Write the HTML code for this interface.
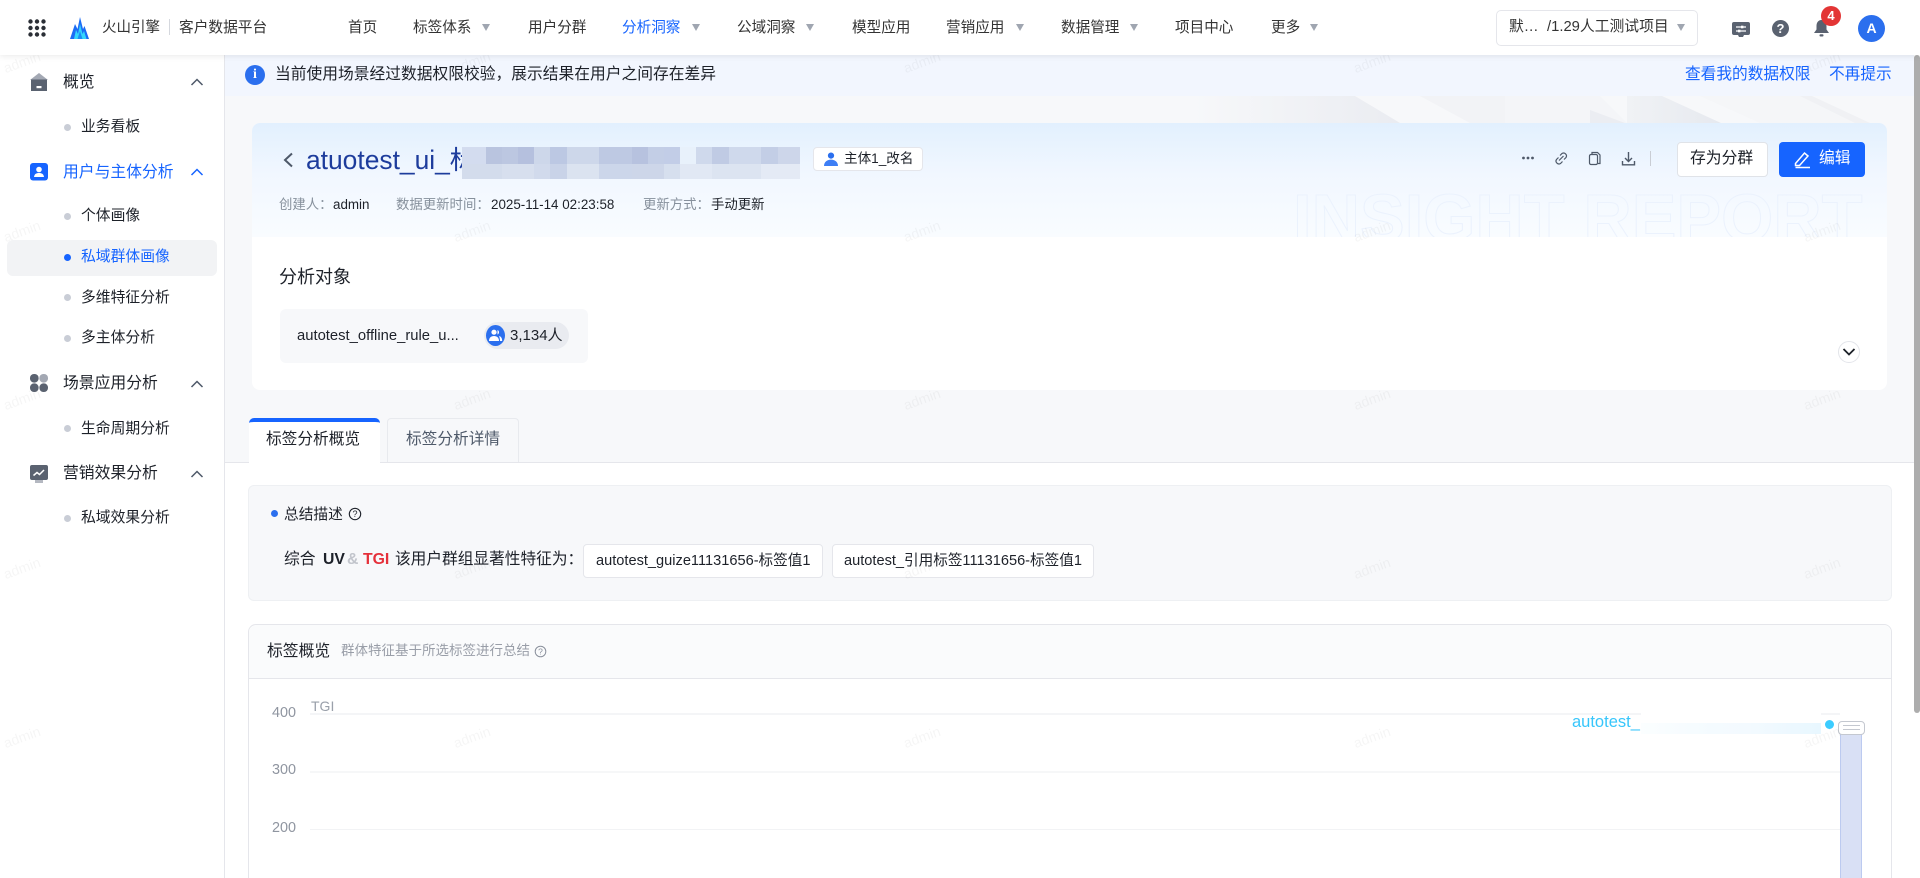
<!DOCTYPE html>
<html lang="zh-CN">
<head>
<meta charset="utf-8">
<title>客户数据平台</title>
<style>
*{box-sizing:border-box;margin:0;padding:0}
html,body{width:1920px;height:878px;overflow:hidden;background:#fff;font-family:"Liberation Sans","Noto Sans CJK SC",sans-serif;color:#1d2129}
#root{position:absolute;left:0;top:0;width:1920px;height:878px;overflow:hidden;background:#fff}
.a{position:absolute}
.t{position:absolute;white-space:nowrap;line-height:20px;height:20px}
.arr{position:absolute;width:0;height:0;border-left:4px solid transparent;border-right:4px solid transparent;border-top:7px solid #a0a6b1;top:24px}
.dot{position:absolute;left:64px;width:7px;height:7px;border-radius:50%;background:#c9cdd6}
.wm{position:absolute;font-size:14px;line-height:16px;width:50px;text-align:center;color:rgba(0,0,0,.04);transform:rotate(-20deg);pointer-events:none}
svg{position:absolute;display:block}
</style>
</head>
<body>
<div id="root">

<!-- main background -->
<div class="a" style="left:224px;top:55px;width:1696px;height:823px;background:#f7f8fa"></div>

<!-- hero texture -->
<svg style="left:1180px;top:96px" width="734" height="30" viewBox="1180 96 734 30">
<defs>
<linearGradient id="g1" x1="0" x2="1" y1="0" y2="0"><stop offset="0" stop-color="#f7f8fa"/><stop offset="1" stop-color="#eaecf1"/></linearGradient>
<linearGradient id="g2" x1="0" x2="1" y1="0" y2="0"><stop offset="0" stop-color="#f0f2f5"/><stop offset="1" stop-color="#e6e9ef"/></linearGradient>
</defs>
<polygon points="1193,96 1355,96 1400,123 1193,123" fill="url(#g1)"/>
<polygon points="1420,96 1505,96 1505,123 1470,123" fill="#f2f3f6"/>
<polygon points="1505,96 1600,96 1627,123 1505,123" fill="#f4f5f8"/>
<polygon points="1590,110 1625,123 1590,123" fill="#ebedf2"/>
<polygon points="1627,96 1662,96 1721,123 1627,123" fill="url(#g2)"/>
<polygon points="1700,96 1800,96 1860,123 1760,123" fill="#f5f6f8"/>
<polygon points="1800,96 1812,96 1870,123 1855,123" fill="#f0f1f4"/>
</svg>

<!-- info bar -->
<div class="a" style="left:224px;top:55px;width:1690px;height:41px;background:#f2f6fe"></div>
<div class="a" style="left:245px;top:65px;width:20px;height:20px;border-radius:50%;background:#2b6fee;color:#fff;font:bold 14px/20px 'Liberation Serif',serif;text-align:center">i</div>
<div class="t" style="left:275px;top:65px;font-size:15.75px;color:#1d2129">当前使用场景经过数据权限校验，展示结果在用户之间存在差异</div>
<div class="t" style="left:1685px;top:65px;font-size:15.7px;color:#1664ff">查看我的数据权限</div>
<div class="t" style="left:1829px;top:65px;font-size:15.7px;color:#1664ff">不再提示</div>

<!-- hero card -->
<div class="a" style="left:252px;top:123px;width:1635px;height:267px;border-radius:8px;background:#fff;overflow:hidden">
  <div class="a" style="left:0;top:0;width:100%;height:114px;background:linear-gradient(180deg,#e2f0fe 0%,#f1f7ff 45%,#f9fcff 100%)"></div>
  <div class="a" style="left:1041px;top:61px;font:bold 67px/70px 'Liberation Sans',sans-serif;color:transparent;-webkit-text-stroke:1px #ebf2fd;white-space:nowrap;height:53px;overflow:hidden">INSIGHT REPORT</div>
</div>

<!-- title -->
<svg style="left:282px;top:152px" width="12" height="16" viewBox="0 0 12 16"><path d="M10 1.500 3 8l7 6.500" fill="none" stroke="#4e5969" stroke-width="2"/></svg>
<div class="t" style="left:306px;top:144px;height:32px;line-height:32px;font-size:26.4px;color:#1d3c9c;width:160px;overflow:hidden">atuotest_ui_标签</div>
<svg style="left:462px;top:147px" width="338" height="32" viewBox="462 147 338 32" shape-rendering="crispEdges">
<g>
<rect x="462" y="147" width="24" height="17" fill="#d3dcef"/><rect x="486" y="147" width="16" height="17" fill="#b9c4df"/><rect x="502" y="147" width="16" height="17" fill="#bcc7e1"/><rect x="518" y="147" width="16" height="17" fill="#b5c0de"/><rect x="534" y="147" width="16" height="17" fill="#cdd7ea"/><rect x="550" y="147" width="17" height="17" fill="#bcc8e3"/><rect x="567" y="147" width="32" height="17" fill="#cdd7ea"/><rect x="599" y="147" width="33" height="17" fill="#bec9e3"/><rect x="632" y="147" width="16" height="17" fill="#b7c2df"/><rect x="648" y="147" width="16" height="17" fill="#c3cee6"/><rect x="664" y="147" width="16" height="17" fill="#c2cde7"/><rect x="680" y="147" width="16" height="17" fill="#e8f1fb"/><rect x="696" y="147" width="16" height="17" fill="#cfd9ec"/><rect x="712" y="147" width="17" height="17" fill="#c0cbe4"/><rect x="729" y="147" width="32" height="17" fill="#cfd9ec"/><rect x="761" y="147" width="17" height="17" fill="#c3cee6"/><rect x="778" y="147" width="22" height="17" fill="#cdd6ea"/>
<rect x="462" y="164" width="40" height="15" fill="#d3dcec"/><rect x="502" y="164" width="32" height="15" fill="#d7dfee"/><rect x="534" y="164" width="16" height="15" fill="#d1daec"/><rect x="550" y="164" width="17" height="15" fill="#c9d3e8"/><rect x="567" y="164" width="32" height="15" fill="#dbe3f0"/><rect x="599" y="164" width="33" height="15" fill="#ccd6ea"/><rect x="632" y="164" width="32" height="15" fill="#cdd6e9"/><rect x="664" y="164" width="16" height="15" fill="#d6dfee"/><rect x="680" y="164" width="32" height="15" fill="#e1e8f4"/><rect x="712" y="164" width="49" height="15" fill="#dce4f1"/><rect x="761" y="164" width="39" height="15" fill="#e4eaf5"/>
</g>
</svg>

<!-- subject tag -->
<div class="a" style="left:813px;top:147px;width:110px;height:24px;background:#fff;border:1px solid #e5e6eb;border-radius:4px"></div>
<svg style="left:824px;top:152px" width="14" height="14" viewBox="0 0 14 14"><circle cx="7" cy="3.600" r="3.100" fill="#2b6fee"/><path d="M0 14c0-4 3-6.400 7-6.400S14 10 14 14z" fill="#3d7ef5"/></svg>
<div class="t" style="left:844px;top:149px;font-size:13.6px;color:#1d2129">主体1_改名</div>

<!-- meta -->
<div class="t" style="left:279px;top:195px;font-size:13.4px;color:#86909c">创建人：</div>
<div class="t" style="left:333px;top:195px;font-size:13.4px">admin</div>
<div class="t" style="left:396px;top:195px;font-size:13.4px;color:#86909c">数据更新时间：</div>
<div class="t" style="left:491px;top:195px;font-size:13.4px">2025-11-14 02:23:58</div>
<div class="t" style="left:643px;top:195px;font-size:13.4px;color:#86909c">更新方式：</div>
<div class="t" style="left:711px;top:195px;font-size:13.4px">手动更新</div>

<!-- toolbar -->
<svg style="left:1520px;top:150px" width="120" height="18" viewBox="1520 150 120 18" fill="none" stroke="#4e5969" stroke-width="1.2">
<g fill="#4e5969" stroke="none"><circle cx="1523.500" cy="158" r="1.400"/><circle cx="1528" cy="158" r="1.400"/><circle cx="1532.500" cy="158" r="1.400"/></g>
<path d="M1560 155.500l2-2a2.900 2.900 0 0 1 4 4l-2 2M1562.500 161.500l-2 2a2.900 2.900 0 0 1-4-4l2-2M1559 160.500l4.500-4.500"/>
<path d="M1592 154v-1.500h5.500l2.500 2.500v8.500h-2"/><rect x="1589.500" y="154.500" width="8" height="10" rx="1.500"/>
<path d="M1628.500 152v9M1625 158l3.500 3.500 3.500-3.500" stroke-width="1.400"/><path d="M1622.500 161v3.800h12V161" stroke-width="1.400"/>
</svg>
<div class="a" style="left:1650px;top:151px;width:1px;height:15px;background:#c9cdd4"></div>
<div class="a" style="left:1677px;top:142px;width:91px;height:35px;background:#fff;border:1px solid #e0e3e8;border-radius:4px"></div>
<div class="t" style="left:1690px;top:149px;font-size:15.8px;color:#1d2129">存为分群</div>
<div class="a" style="left:1779px;top:142px;width:86px;height:35px;background:#1664ff;border-radius:4px"></div>
<svg style="left:1794px;top:150px" width="18" height="19" viewBox="0 0 18 19" fill="none" stroke="#fff" stroke-width="1.500"><path d="M1.500 13.500 10.500 3l3.500 3-8.500 9.500H1.500zM1.500 17.500h14.500"/></svg>
<div class="t" style="left:1819px;top:149px;font-size:15.8px;color:#fff">编辑</div>

<!-- analysis object -->
<div class="t" style="left:279px;top:267px;font-size:18px;color:#1d2129">分析对象</div>
<div class="a" style="left:280px;top:309px;width:308px;height:54px;background:#f7f8fa;border-radius:6px"></div>
<div class="t" style="left:297px;top:326px;font-size:14.8px;color:#1d2129">autotest_offline_rule_u...</div>
<div class="a" style="left:484px;top:322px;width:85px;height:27px;background:#e9ebf0;border-radius:14px"></div>
<div class="a" style="left:486px;top:325px;width:19px;height:21px;border-radius:50%;background:#2b6fee"></div>
<svg style="left:488px;top:329px" width="15" height="13" viewBox="0 0 15 13" fill="#fff"><circle cx="6" cy="3.200" r="2.600"/><path d="M1 12c0-3.200 2-5 5-5s5 1.800 5 5z"/><path d="M9.500 1a2.500 2.500 0 0 1 0 4.600zM11 7c2 .4 3.200 2.200 3.200 5H12c0-2-.4-3.600-1-5z"/></svg>
<div class="t" style="left:510px;top:326px;font-size:15px;color:#1d2129">3,134人</div>
<div class="a" style="left:1838px;top:341px;width:22px;height:22px;border-radius:50%;background:#fff;border:1px solid #e3e5ea"></div>
<svg style="left:1842px;top:347px" width="14" height="10" viewBox="0 0 14 10"><path d="M1.500 2 7 7.500 12.500 2" fill="none" stroke="#1d2129" stroke-width="1.800"/></svg>

<!-- white content panel -->
<div class="a" style="left:225px;top:462px;width:1689px;height:416px;background:#fff;border-top:1px solid #e5e6eb"></div>

<!-- tabs -->
<div class="a" style="left:387px;top:418px;width:132px;height:44px;background:#f7f8fa;border:1px solid #e8eaee;border-bottom:0;border-radius:4px 4px 0 0"></div>
<div class="t" style="left:406px;top:430px;font-size:15.7px;color:#4e5969">标签分析详情</div>
<div class="a" style="left:249px;top:418px;width:131px;height:46px;background:#fff;border-top:4px solid #1664ff;border-radius:5px 5px 0 0"></div>
<div class="t" style="left:266px;top:430px;font-size:15.7px;color:#1d2129">标签分析概览</div>

<!-- summary -->
<div class="a" style="left:248px;top:485px;width:1644px;height:116px;background:#f7f8fa;border:1px solid #eef0f3;border-radius:6px"></div>
<div class="a" style="left:271px;top:510px;width:7px;height:7px;border-radius:50%;background:#2b6fee"></div>
<div class="t" style="left:284px;top:505px;font-size:14.7px;color:#1d2129">总结描述</div>
<svg style="left:348px;top:507px" width="14" height="14" viewBox="0 0 14 14"><circle cx="7" cy="7" r="5.700" fill="none" stroke="#1d2129" stroke-width="1.100"/><text x="7" y="10.200" font-size="9" font-family="Liberation Sans" text-anchor="middle" fill="#1d2129">?</text></svg>
<div class="t" style="left:284px;top:550px;font-size:15.8px;color:#1d2129">综合</div>
<div class="t" style="left:323px;top:550px;font-size:15.8px;font-weight:bold;color:#1d2129">UV</div>
<div class="t" style="left:347px;top:550px;font-size:15.8px;color:#c2c5cc;font-weight:bold">&amp;</div>
<div class="t" style="left:363px;top:550px;font-size:15.8px;font-weight:bold;color:#e5303a">TGI</div>
<div class="t" style="left:395px;top:550px;font-size:15.7px;color:#1d2129">该用户群组显著性特征为：</div>
<div class="a" style="left:583px;top:544px;width:240px;height:34px;background:#fff;border:1px solid #e5e6eb;border-radius:4px"></div>
<div class="t" style="left:596px;top:551px;font-size:14.6px;color:#1d2129">autotest_guize11131656-标签值1</div>
<div class="a" style="left:832px;top:544px;width:262px;height:34px;background:#fff;border:1px solid #e5e6eb;border-radius:4px"></div>
<div class="t" style="left:844px;top:551px;font-size:14.6px;color:#1d2129">autotest_引用标签11131656-标签值1</div>

<!-- overview card -->
<div class="a" style="left:248px;top:624px;width:1644px;height:270px;background:#fff;border:1px solid #e5e6eb;border-radius:8px"></div>
<div class="a" style="left:249px;top:625px;width:1642px;height:54px;background:#fafbfc;border-bottom:1px solid #e5e6eb;border-radius:8px 8px 0 0"></div>
<div class="t" style="left:267px;top:642px;font-size:15.8px;color:#1d2129">标签概览</div>
<div class="t" style="left:341px;top:641px;font-size:13.5px;color:#999ea8">群体特征基于所选标签进行总结</div>
<svg style="left:534px;top:645px" width="13" height="13" viewBox="0 0 13 13"><circle cx="6.500" cy="6.500" r="5.300" fill="none" stroke="#8a909c" stroke-width="1"/><text x="6.500" y="9.500" font-size="8.500" font-family="Liberation Sans" text-anchor="middle" fill="#8a909c">?</text></svg>

<!-- chart -->
<div class="a" style="left:310px;top:713px;width:1530px;height:2px;background:#f4f5f7"></div>
<div class="a" style="left:310px;top:771px;width:1530px;height:2px;background:#f6f7f8"></div>
<div class="a" style="left:310px;top:829px;width:1530px;height:1px;background:#f2f3f5"></div>
<div class="t" style="left:272px;top:703px;font-size:14.4px;color:#8f95a0">400</div>
<div class="t" style="left:272px;top:760px;font-size:14.4px;color:#8f95a0">300</div>
<div class="t" style="left:272px;top:818px;font-size:14.4px;color:#8f95a0">200</div>
<div class="a" style="left:311px;top:700px;width:24px;height:13px;overflow:hidden;font-size:14px;line-height:13px;color:#9aa0aa"><div>TGI</div></div>
<div class="a" style="left:1641px;top:707px;width:180px;height:16px;background:#fff"></div>
<div class="a" style="left:1641px;top:723px;width:180px;height:11px;background:linear-gradient(90deg,#fbfeff,#f4fbff 40%,#f3faff 60%,#e8f7ff)"></div>
<div class="t" style="left:1572px;top:712px;font-size:16.5px;color:#37c6fb">autotest_</div>
<div class="a" style="left:1824.5px;top:719.5px;width:9px;height:9px;border-radius:50%;background:#3cccff"></div>
<div class="a" style="left:1840px;top:730px;width:22px;height:150px;background:#d9e0f5;border:1px solid #bccaf0;border-top:0"></div>
<div class="a" style="left:1838px;top:721px;width:27px;height:14px;background:#fff;border:1.5px solid #c4c8d0;border-radius:4px"></div>
<div class="a" style="left:1843px;top:725px;width:17px;height:1px;background:#c4c8d0"></div>
<div class="a" style="left:1843px;top:729px;width:17px;height:1px;background:#c4c8d0"></div>

<!-- sidebar -->
<div class="a" style="left:0;top:55px;width:225px;height:823px;background:#fff;border-right:1px solid #e5e6eb"></div>
<div class="a" style="left:7px;top:240px;width:210px;height:36px;background:#f2f3f5;border-radius:6px"></div>

<svg style="left:30px;top:73px" width="18" height="18" viewBox="0 0 18 18"><path d="M9 0 0 7h18z" fill="#a3a8b3"/><path d="M1 6.500h16V18H1z" fill="#5a6270"/><rect x="6.500" y="13" width="5" height="2.200" fill="#fff"/></svg>
<div class="t" style="left:63px;top:73px;font-size:15.8px;color:#1d2129">概览</div>
<svg style="left:190px;top:77px" width="14" height="10" viewBox="0 0 14 10"><path d="M1.500 8 7 2.500 12.500 8" fill="none" stroke="#4e5969" stroke-width="1.500"/></svg>
<div class="dot" style="top:124px"></div>
<div class="t" style="left:81px;top:117px;font-size:14.8px;color:#1d2129">业务看板</div>

<svg style="left:30px;top:163px" width="18" height="18" viewBox="0 0 18 18"><rect width="18" height="17.500" rx="3" fill="#1664ff"/><circle cx="9" cy="6.500" r="2.800" fill="#fff"/><path d="M4 14c.4-3 2.200-4 5-4s4.600 1 5 4z" fill="#fff"/></svg>
<div class="t" style="left:63px;top:163px;font-size:15.8px;color:#1664ff">用户与主体分析</div>
<svg style="left:190px;top:167px" width="14" height="10" viewBox="0 0 14 10"><path d="M1.500 8 7 2.500 12.500 8" fill="none" stroke="#1664ff" stroke-width="1.500"/></svg>
<div class="dot" style="top:213px"></div>
<div class="t" style="left:81px;top:206px;font-size:14.8px;color:#1d2129">个体画像</div>
<div class="dot" style="top:254px;background:#1664ff"></div>
<div class="t" style="left:81px;top:247px;font-size:14.8px;color:#1664ff">私域群体画像</div>
<div class="dot" style="top:294px"></div>
<div class="t" style="left:81px;top:288px;font-size:14.8px;color:#1d2129">多维特征分析</div>
<div class="dot" style="top:335px"></div>
<div class="t" style="left:81px;top:328px;font-size:14.8px;color:#1d2129">多主体分析</div>

<svg style="left:30px;top:374px" width="18" height="18" viewBox="0 0 18 18"><rect x="0" y="0" width="8.600" height="8.600" rx="4" fill="#5a6270"/><rect x="9.400" y="0" width="8.600" height="8.600" rx="4" fill="#a3a8b3"/><rect x="0" y="9.400" width="8.600" height="8.600" rx="4" fill="#5a6270"/><rect x="9.400" y="9.400" width="8.600" height="8.600" rx="4" fill="#5a6270"/></svg>
<div class="t" style="left:63px;top:374px;font-size:15.8px;color:#1d2129">场景应用分析</div>
<svg style="left:190px;top:379px" width="14" height="10" viewBox="0 0 14 10"><path d="M1.500 8 7 2.500 12.500 8" fill="none" stroke="#4e5969" stroke-width="1.500"/></svg>
<div class="dot" style="top:425px"></div>
<div class="t" style="left:81px;top:419px;font-size:14.8px;color:#1d2129">生命周期分析</div>

<svg style="left:30px;top:465px" width="18" height="18" viewBox="0 0 18 18"><rect x="5" y="13" width="8" height="5" fill="#b4b8c1"/><rect width="18" height="15" rx="2" fill="#5a6270"/><path d="M3.500 10.500 7 7.500l2.500 2L14 5" fill="none" stroke="#fff" stroke-width="1.500"/></svg>
<div class="t" style="left:63px;top:464px;font-size:15.8px;color:#1d2129">营销效果分析</div>
<svg style="left:190px;top:469px" width="14" height="10" viewBox="0 0 14 10"><path d="M1.500 8 7 2.500 12.500 8" fill="none" stroke="#4e5969" stroke-width="1.500"/></svg>
<div class="dot" style="top:515px"></div>
<div class="t" style="left:81px;top:508px;font-size:14.8px;color:#1d2129">私域效果分析</div>

<!-- watermarks -->
<div class="wm" style="left:-3px;top:54px">admin</div><div class="wm" style="left:447px;top:54px">admin</div><div class="wm" style="left:897px;top:54px">admin</div><div class="wm" style="left:1347px;top:54px">admin</div><div class="wm" style="left:1797px;top:54px">admin</div>
<div class="wm" style="left:-3px;top:223px">admin</div><div class="wm" style="left:447px;top:223px">admin</div><div class="wm" style="left:897px;top:223px">admin</div><div class="wm" style="left:1347px;top:223px">admin</div><div class="wm" style="left:1797px;top:223px">admin</div>
<div class="wm" style="left:-3px;top:391px">admin</div><div class="wm" style="left:447px;top:391px">admin</div><div class="wm" style="left:897px;top:391px">admin</div><div class="wm" style="left:1347px;top:391px">admin</div><div class="wm" style="left:1797px;top:391px">admin</div>
<div class="wm" style="left:-3px;top:560px">admin</div><div class="wm" style="left:447px;top:560px">admin</div><div class="wm" style="left:897px;top:560px">admin</div><div class="wm" style="left:1347px;top:560px">admin</div><div class="wm" style="left:1797px;top:560px">admin</div>
<div class="wm" style="left:-3px;top:729px">admin</div><div class="wm" style="left:447px;top:729px">admin</div><div class="wm" style="left:897px;top:729px">admin</div><div class="wm" style="left:1347px;top:729px">admin</div><div class="wm" style="left:1797px;top:729px">admin</div>

<!-- scrollbar -->
<div class="a" style="left:1914px;top:55px;width:6px;height:823px;background:#fff"></div>
<div class="a" style="left:1914px;top:55px;width:6px;height:658px;background:#adadad;border-radius:3px"></div>

<!-- header -->
<div class="a" style="left:0;top:0;width:1920px;height:55px;background:#fff;box-shadow:0 1px 6px rgba(0,0,0,.09)">
  <svg style="left:28px;top:19px" width="18" height="18" viewBox="0 0 18 18" fill="#2b2f36">
    <circle cx="2.500" cy="2.500" r="2.200"/><circle cx="9" cy="2.500" r="2.200"/><circle cx="15.500" cy="2.500" r="2.200"/>
    <circle cx="2.500" cy="9" r="2.200"/><circle cx="9" cy="9" r="2.200"/><circle cx="15.500" cy="9" r="2.200"/>
    <circle cx="2.500" cy="15.500" r="2.200"/><circle cx="9" cy="15.500" r="2.200"/><circle cx="15.500" cy="15.500" r="2.200"/>
  </svg>
  <svg style="left:70px;top:17px" width="20" height="22" viewBox="0 0 20 22">
    <path d="M0 22 5 7l2.500 5L10 0l3 12 1.500-3L19 22z" fill="#1b6cf5"/>
    <path d="M4 22 6 13l2 4 2-10 2.500 10L14 14l2.500 8z" fill="#35d6fb"/>
    <path d="M7.500 22 10 14l2.500 8z" fill="#1b8cf5"/>
  </svg>
  <div class="t" style="left:102px;top:18px;font-size:14.5px;color:#333">火山引擎</div>
  <div class="a" style="left:169px;top:19px;width:1px;height:16px;background:#d5d8de"></div>
  <div class="t" style="left:179px;top:18px;font-size:14.7px;color:#333">客户数据平台</div>

  <div class="t" style="left:348px;top:18px;font-size:14.6px;color:#333">首页</div>
  <div class="t" style="left:413px;top:18px;font-size:14.6px;color:#333">标签体系</div><div class="arr" style="left:482px"></div>
  <div class="t" style="left:528px;top:18px;font-size:14.6px;color:#333">用户分群</div>
  <div class="t" style="left:622px;top:18px;font-size:14.6px;color:#1664ff">分析洞察</div><div class="arr" style="left:692px"></div>
  <div class="t" style="left:737px;top:18px;font-size:14.6px;color:#333">公域洞察</div><div class="arr" style="left:806px"></div>
  <div class="t" style="left:852px;top:18px;font-size:14.6px;color:#333">模型应用</div>
  <div class="t" style="left:946px;top:18px;font-size:14.6px;color:#333">营销应用</div><div class="arr" style="left:1016px"></div>
  <div class="t" style="left:1061px;top:18px;font-size:14.6px;color:#333">数据管理</div><div class="arr" style="left:1130px"></div>
  <div class="t" style="left:1175px;top:18px;font-size:14.6px;color:#333">项目中心</div>
  <div class="t" style="left:1271px;top:18px;font-size:14.6px;color:#333">更多</div><div class="arr" style="left:1310px"></div>

  <div class="a" style="left:1496px;top:10px;width:202px;height:36px;background:#fff;border:1px solid #e5e6eb;border-radius:5px"></div>
  <div class="t" style="left:1509px;top:17px;font-size:14.8px;color:#333">默…</div>
  <div class="t" style="left:1547px;top:17px;font-size:14.8px;color:#333">/1.29人工测试项目</div>
  <div class="arr" style="left:1677px;top:24px"></div>

  <svg style="left:1732px;top:22px" width="18" height="15" viewBox="0 0 18 15"><path d="M2 0h14a2 2 0 0 1 2 2v9a2 2 0 0 1-2 2h-4l-1 2H7l-1-2H2a2 2 0 0 1-2-2V2a2 2 0 0 1 2-2z" fill="#5a6270"/><path d="M4 5h10M4 9h10" stroke="#fff" stroke-width="1.200"/><rect x="9" y="3.700" width="2.400" height="2.600" fill="#fff"/><rect x="6" y="7.700" width="2.400" height="2.600" fill="#fff"/></svg>
  <div class="a" style="left:1772px;top:20px;width:17px;height:17px;border-radius:50%;background:#5a6270;color:#fff;font:bold 13px/17px 'Liberation Sans',sans-serif;text-align:center">?</div>
  <svg style="left:1814px;top:20px" width="15" height="17" viewBox="0 0 15 17" fill="#5a6270"><path d="M7.500 0C4 0 2.500 3 2.500 6v3.500L0 13h15l-2.500-3.500V6C12.500 3 11 0 7.500 0z"/><rect x="5.500" y="14.300" width="4" height="2.200" rx="1"/></svg>
  <div class="a" style="left:1821px;top:6px;width:20px;height:20px;border-radius:50%;background:#e33535;color:#fff;font:bold 13px/20px 'Liberation Sans',sans-serif;text-align:center">4</div>
  <div class="a" style="left:1858px;top:15px;width:27px;height:27px;border-radius:50%;background:#2b6fee;color:#fff;font:bold 14px/26px 'Liberation Sans',sans-serif;text-align:center">A</div>
</div>

</div>
</body>
</html>
